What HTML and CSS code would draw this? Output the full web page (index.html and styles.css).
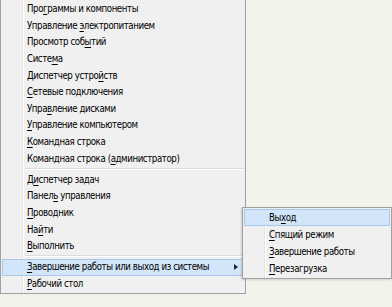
FILE: index.html
```
<!DOCTYPE html>
<html>
<head>
  <link rel="stylesheet" href="styles.css">
</head>
<body>
  <div class="desktop">
    <div class="menu main-menu">
      <div class="item"><span>Про<u>г</u>раммы и компоненты</span></div>
      <div class="item"><span>Управление <u>э</u>лектропитанием</span></div>
      <div class="item"><span>Просмотр соб<u>ы</u>тий</span></div>
      <div class="item"><span>Систе<u>м</u>а</span></div>
      <div class="item"><span>Диспетчер устро<u>й</u>ств</span></div>
      <div class="item"><span><u>С</u>етевые подключения</span></div>
      <div class="item"><span>Упра<u>в</u>ление дисками</span></div>
      <div class="item"><span><u>У</u>правление компьютером</span></div>
      <div class="item"><span><u>К</u>омандная строка</span></div>
      <div class="item"><span>Командная строка (<u>а</u>дминистратор)</span></div>
      <div class="sep"></div>
      <div class="item"><span>Д<u>и</u>спетчер задач</span></div>
      <div class="item"><span>Панел<u>ь</u> управления</span></div>
      <div class="item"><span><u>П</u>роводник</span></div>
      <div class="item"><span>На<u>й</u>ти</span></div>
      <div class="item"><span><u>В</u>ыполнить</span></div>
      <div class="sep"></div>
      <div class="item active">
        <span><u>З</u>авершение работы или выход из системы</span>
        <span class="arrow"></span>
      </div>
      <div class="item"><span><u>Р</u>абочий стол</span></div>
    </div>

    <div class="menu sub-menu">
      <div class="item active"><span>Вы<u>х</u>од</span></div>
      <div class="item"><span><u>С</u>пящий режим</span></div>
      <div class="item"><span><u>З</u>авершение работы</span></div>
      <div class="item"><span><u>П</u>ерезагрузка</span></div>
    </div>
  </div>
</body>
</html>
```

FILE: styles.css
```
body {
  margin: 0;
  background-color: #f7f7f3;
  font-family: "DejaVu Sans Condensed", "Liberation Sans", sans-serif;
  font-size: 9.6px;
  letter-spacing: -0.4px;
  color: #000;
}

.desktop {
  position: relative;
  width: 392px;
  height: 307px;
  overflow: hidden;
  background-color: #f3f3ec;
}

.menu {
  box-sizing: border-box;
  border: 1px solid #a0a0a0;
  background: linear-gradient(to right, #f0f0f0 21px, #e2e3e3 21px, #e2e3e3 22px, #ffffff 22px, #ffffff 23px, #f0f0f0 23px);
}

.main-menu {
  width: 246px;
  border-top: none;
  padding-top: 1px;
  padding-bottom: 1px;
}

.item {
  box-sizing: border-box;
  height: 16.6px;
  line-height: 16px;
  padding-left: 25px;
  margin: 0 1px;
  display: flex;
  align-items: center;
  justify-content: space-between;
  white-space: nowrap;
}

.item u {
  text-underline-offset: 2px;
}

.item.active {
  border: 1px solid #a9c9ec;
  background-color: #d3e5f8;
  padding-left: 24px;
}

.sep {
  height: 4.5px;
  margin-left: 24px;
  background: linear-gradient(#f0f0f0 1px, #dcdcdc 1px, #dcdcdc 2px, #ffffff 2px, #ffffff 3px, #f0f0f0 3px);
}

.arrow {
  width: 0;
  height: 0;
  margin-right: 5px;
  border-top: 3.5px solid transparent;
  border-bottom: 3.5px solid transparent;
  border-left: 4px solid #222;
}

.sub-menu {
  position: absolute;
  left: 242px;
  top: 207px;
  width: 150px;
  padding: 1px 0;
  box-shadow: -1px 1px 2px rgba(0, 0, 0, 0.15);
}

.sub-menu .item {
  height: 17px;
}
```
